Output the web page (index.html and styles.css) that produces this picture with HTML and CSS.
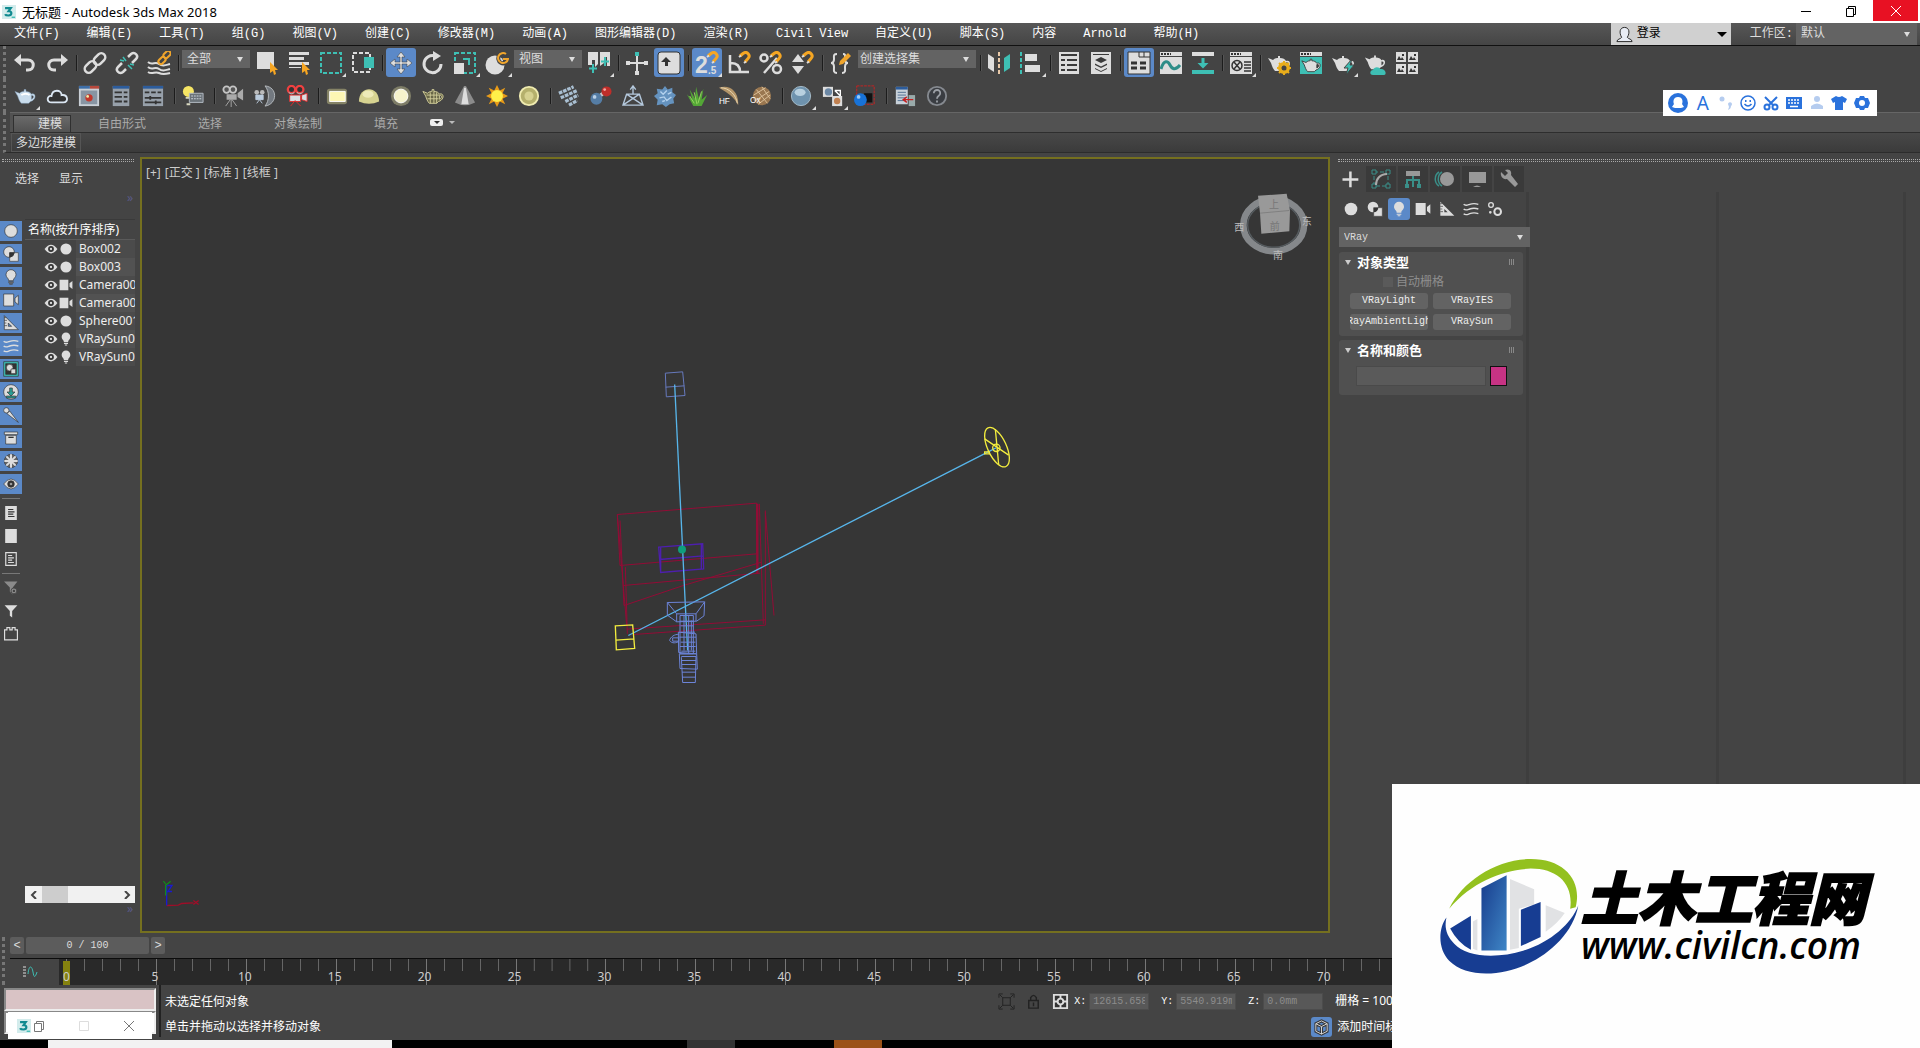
FILE: index.html
```html
<!DOCTYPE html>
<html lang="zh-CN">
<head>
  <meta charset="UTF-8">
  <title>无标题 - Autodesk 3ds Max 2018</title>
  <link rel="stylesheet" href="styles.css">
</head>
<body>

<!-- shapes used in more than one place -->
<svg class="sprite" aria-hidden="true">
  <symbol id="ball" viewBox="0 0 24 24"><circle cx="12" cy="12" r="9.500"/></symbol>
  <symbol id="shapes" viewBox="0 0 24 24"><circle cx="9" cy="9" r="8"/><path d="M10 10h13v13H10z" stroke="#444"/><path d="M10 17a8 8 0 0 0 7-7h-7z" fill="#333"/></symbol>
  <symbol id="bulb" viewBox="0 0 24 24"><path d="M12 1a7.500 7.500 0 0 0-7.500 7.500c0 4.500 4 5 4 9h7c0-4 4-4.500 4-9A7.500 7.500 0 0 0 12 1z"/><path d="M8.500 19h7v1.500h-7zM10 21.500h4V23h-4z"/></symbol>
  <symbol id="camera" viewBox="0 0 24 24"><path d="M1 3h15v18H1zM18 9l5-4v14l-5-4z"/></symbol>
  <symbol id="ruler" viewBox="0 0 24 24"><path fill-rule="evenodd" d="M2 1l21 21H2zM8 12v5h5z"/><path d="M2 4h3M2 8h4M2 12h3M2 16h4" stroke="#333" fill="none"/></symbol>
  <symbol id="waves" viewBox="0 0 24 24"><g fill="none" stroke="currentColor" stroke-width="2"><path d="M1 5c3 3 6 1 9 0s7-2 13 0"/><path d="M1 12c3 3 6 1 9 0s7-2 13 0"/><path d="M1 19c3 3 6 1 9 0s7-2 13 0"/></g></symbol>
  <symbol id="eye" viewBox="0 0 24 24"><path d="M1 12q11-15 22 0q-11 15-22 0z" fill="#ddd"/><circle cx="12" cy="12" r="5" fill="#333"/><circle cx="12" cy="12" r="2" fill="#ddd"/></symbol>
  <symbol id="teapot" viewBox="0 0 24 24"><path d="M1 7l5 2c2-2 4-2 5-2V5h2v2c3 0 5 1 6 3 5-2 6 6-1 8l-2 2H8c-2-2-3-5-4-8z"/><path d="M19 11.500c3-1 3 3 0 4z" fill="#444"/></symbol>
  <symbol id="magnet" viewBox="0 0 24 24"><path d="M12 5l3-2.500c4-3 8 2 5 5L17 11" fill="none" stroke="#f5a623" stroke-width="3"/><path d="M11 6l2-1.500M16 12l2-1.500" stroke="#ddd" stroke-width="2"/></symbol>
  <symbol id="max" viewBox="0 0 16 16"><path d="M0 0h16v16H0z" fill="#d3ecec"/><path d="M3.500 3.500h6.500L7.500 7c4.500 0 4 5 0 5-2 0-3.500-.5-4-1.500" fill="none" stroke="#108a90" stroke-width="2.500"/><path d="M11 14h4" stroke="#3ab9b0" stroke-width="1.500"/></symbol>
</svg>

<header class="titlebar">
  <svg class="app-icon"><use href="#max"/></svg>
  <h1>无标题 - Autodesk 3ds Max 2018</h1>
  <div class="window-buttons">
    <button aria-label="最小化"><svg viewBox="0 0 12 12"><path d="M1 6.500h10"/></svg></button>
    <button aria-label="还原"><svg viewBox="0 0 12 12"><path d="M1.500 3.500h7v8h-7zM3.500 3V1.500h7v8H9"/></svg></button>
    <button class="close" aria-label="关闭"><svg viewBox="0 0 12 12"><path d="M1 1l10 10M11 1L1 11"/></svg></button>
  </div>
</header>

<nav class="menubar">
  <a href="#">文件(F)</a><a href="#">编辑(E)</a><a href="#">工具(T)</a><a href="#">组(G)</a><a href="#">视图(V)</a><a href="#">创建(C)</a><a href="#">修改器(M)</a><a href="#">动画(A)</a><a href="#">图形编辑器(D)</a><a href="#">渲染(R)</a><a href="#">Civil View</a><a href="#">自定义(U)</a><a href="#">脚本(S)</a><a href="#">内容</a><a href="#">Arnold</a><a href="#">帮助(H)</a>
  <div class="account">
    <button class="signin"><svg viewBox="0 0 18 18"><path d="M1 16.500c0-3 4-2.500 5-4.500C3 7 4 1.500 9 1.500S15 7 12 12c1 2 5 1.500 5 4.500z" fill="#e8ecf4" stroke="#222"/></svg>登录</button>
    <label for="workspace">工作区:</label>
    <span class="pick pick-workspace"><select id="workspace"><option>默认</option></select></span>
  </div>
</nav>

<div class="toolbars">
  <div class="toolbar" role="toolbar" aria-label="主工具栏">
    <button aria-label="撤销"><svg viewBox="0 0 24 24"><path d="M3 9h12c7 0 7 10 0 10h-2" fill="none" stroke="#ddd" stroke-width="3"/><path d="M8 3v12L1 9z"/></svg></button>
    <button aria-label="重做"><svg viewBox="0 0 24 24"><path d="M21 9H9c-7 0-7 10 0 10h2" fill="none" stroke="#ddd" stroke-width="3"/><path d="M16 3v12l7-6z"/></svg></button>
    <i class="sep"></i>
    <button aria-label="链接"><svg viewBox="0 0 24 24"><g fill="none" stroke="#ddd" stroke-width="2.500"><rect x="10" y="4" width="13" height="8" rx="4" transform="rotate(-45 16.500 8)"/><rect x="1" y="12" width="13" height="8" rx="4" transform="rotate(-45 7.500 16)"/></g></svg></button>
    <button aria-label="取消链接"><svg viewBox="0 0 24 24"><g fill="none" stroke="#ddd" stroke-width="2.500"><path d="M13 6l3-3c4-3 8 2 5 5l-4 4M11 18l-3 3c-4 3-8-2-5-5l4-4"/><path d="M8 6l3 4M5 9l4 1M13 14l4 4M15 13l4 1" stroke="#3ebfb4" stroke-width="1.500"/></g></svg></button>
    <button aria-label="绑定到空间扭曲"><svg viewBox="0 0 24 24"><g fill="none" stroke="#ddd" stroke-width="2"><path d="M1 11c4 4 7-1 11 2s7 1 11 0M1 16c4 4 7-1 11 2s7 1 11 0M1 21c4 3 7-1 11 1s7 1 11 0"/><g stroke="#f0a52c"><rect x="16" y="1" width="8" height="5" rx="2.500" transform="rotate(-45 20 3.500)"/><rect x="11" y="7" width="8" height="5" rx="2.500" transform="rotate(-45 15 9.500)"/></g></g></svg></button>
    <i class="sep"></i>
    <span class="pick pick-short"><select aria-label="选择过滤器"><option>全部</option></select></span>
    <button aria-label="选择对象"><svg viewBox="0 0 24 24"><path d="M2 1h17v17H2z"/><path d="M15 11v11l3-2 1 4 2-1-1-4h3z" fill="#f6a623"/></svg></button>
    <button aria-label="按名称选择"><svg viewBox="0 0 24 24"><path d="M2 1h20v3H2zM2 6h15v3H2zM2 11h20v3H2zM2 16h12v1H2z"/><path d="M15 11v11l3-2 1 4 2-1-1-4h3z" fill="#f6a623"/></svg></button>
    <button class="flyout" aria-label="矩形选择区域"><svg viewBox="0 0 24 24"><path d="M2 2h20v20H2z" fill="none" stroke="#3ebfb4" stroke-width="2" stroke-dasharray="4 2"/></svg></button>
    <button aria-label="窗口/交叉"><svg viewBox="0 0 24 24"><path d="M2 2h17v19H2z" fill="none" stroke="#ddd" stroke-width="2" stroke-dasharray="4 2"/><path d="M13 6h10v11H13z" fill="#3ebfb4"/></svg></button>
    <i class="sep"></i>
    <button class="on" aria-label="选择并移动"><svg viewBox="0 0 24 24"><path d="M12 1l4 5h-3v5h5V8l5 4-5 4v-3h-5v5h3l-4 5-4-5h3v-5H6v3l-5-4 5-4v3h5V6H8z" stroke="#333" stroke-width=".5"/></svg></button>
    <button aria-label="选择并旋转"><svg viewBox="0 0 24 24"><path d="M14 5a8.500 8.500 0 1 0 6 8" fill="none" stroke="#ddd" stroke-width="3"/><path d="M12 0v10l8-5z"/></svg></button>
    <button class="flyout" aria-label="选择并缩放"><svg viewBox="0 0 24 24"><path d="M2 2h20v20H2z" fill="none" stroke="#3ebfb4" stroke-width="2" stroke-dasharray="4 2"/><path d="M1 12h10v11H1z"/><path d="M10 8h6v6" fill="none" stroke="#3ebfb4" stroke-width="2"/></svg></button>
    <button class="flyout" aria-label="选择并放置"><svg viewBox="0 0 24 24"><circle cx="10" cy="14" r="9.500"/><path d="M22 4a5 5 0 1 0 1 5h-5" fill="none" stroke="#444" stroke-width="4"/><path d="M21 3a5 5 0 1 0 2 5h-5" fill="none" stroke="#f0a52c" stroke-width="2"/></svg></button>
    <span class="pick pick-short"><select aria-label="参考坐标系"><option>视图</option></select></span>
    <button class="flyout" aria-label="使用轴点中心"><svg viewBox="0 0 24 24"><path d="M1 1h10v12l-3 3V9H5v5H1zM13 1h10v14h-3V6h-3v6l-4 3z"/><path d="M6 13v9M2 17.500h8M18 6v9M14 10.500h8" stroke="#3ebfb4" stroke-width="2"/></svg></button>
    <i class="sep"></i>
    <button aria-label="选择并操纵"><svg viewBox="0 0 24 24"><path d="M11 5h2v6h8v2h-8v8h-2v-8H3v-2h8zM1 10h4v4H1zM19 10h4v4h-4zM10 20h4v4h-4z"/><path d="M10 1h4v4h-4z" fill="#3ebfb4"/></svg></button>
    <button class="on" aria-label="键盘快捷键覆盖"><svg viewBox="0 0 24 24"><rect x="1" y="1" width="22" height="22" rx="3" stroke="#333"/><path d="M9 6l5 5h-3v4H8v-4H4z" fill="#333"/></svg></button>
    <i class="sep"></i>
    <button class="on flyout" aria-label="捕捉开关"><svg viewBox="0 0 24 24"><text class="glyph" x="0" y="22">2</text><text class="glyph-s" x="13" y="23">.5</text><use href="#magnet" x="1"/></svg></button>
    <button aria-label="角度捕捉"><svg viewBox="0 0 24 24"><path d="M3 4v17h19M4 12c6 0 9 3 9 9" fill="none" stroke="#ddd" stroke-width="2.500"/><use href="#magnet" x="1"/></svg></button>
    <button aria-label="百分比捕捉"><svg viewBox="0 0 24 24"><g fill="none" stroke="#ddd" stroke-width="2.500"><circle cx="5" cy="7" r="3.500"/><circle cx="18" cy="18" r="4"/><path d="M18 7L5 22"/></g><use href="#magnet"/></svg></button>
    <button aria-label="微调器捕捉"><svg viewBox="0 0 24 24"><path d="M7 3l6 8H1zM1 15h12l-6 8z"/><use href="#magnet"/></svg></button>
    <i class="sep"></i>
    <button aria-label="编辑命名选择集"><svg viewBox="0 0 24 24"><path d="M8 3c-4 0-3 2-3 5 0 2-1 4-3 4 2 0 3 2 3 4 0 3-1 6 3 6M14 3c3 0 2 2 2 5 0 2 1 4 3 4-2 0-3 2-3 4 0 3 1 6-3 6" fill="none" stroke="#ddd" stroke-width="2"/><path d="M10 14l1-4 8-8 3 3-8 8z" fill="#f0a52c"/></svg></button>
    <span class="pick pick-long"><select aria-label="命名选择集"><option>创建选择集</option></select></span>
    <i class="sep"></i>
    <button aria-label="镜像"><svg viewBox="0 0 24 24"><path d="M1 3l6 4v14l-6-4z"/><path d="M23 3l-6 4v14l6-4z" fill="#3ebfb4"/><path d="M12 1v22" stroke="#e8c9a8" stroke-width="2" stroke-dasharray="4 2"/></svg></button>
    <button class="flyout" aria-label="对齐"><svg viewBox="0 0 24 24"><path d="M6 3h12v7H6zM6 14h15v7H6z"/><path d="M2 1v22" stroke="#3ebfb4" stroke-width="2" stroke-dasharray="4 2"/></svg></button>
    <i class="sep"></i>
    <button aria-label="场景资源管理器"><svg viewBox="0 0 24 24"><path d="M2 1h20v22H2z"/><path d="M4 4h16M4 9h4M10 9h10M4 14h4M10 14h10M4 19h4M10 19h10" stroke="#3a3a3a" stroke-width="2"/></svg></button>
    <button aria-label="层资源管理器"><svg viewBox="0 0 24 24"><path d="M2 1h20v22H2z"/><path d="M4 3.500h16" stroke="#3a3a3a"/><path d="M12 6l6 3-6 3-6-3zM6 12.500l6 3 6-3v1.500l-6 3-6-3zM6 17l6 3 6-3v1l-6 3-6-3z" fill="#3a3a3a"/></svg></button>
    <i class="sep"></i>
    <button class="on" aria-label="切换功能区"><svg viewBox="0 0 24 24"><path d="M1 1h22v22H1z" stroke="#333"/><path d="M12 1v5M17 1v5M12 6h11" stroke="#333" fill="none"/><path d="M4 12h6M13 12h6M4 17h6M13 17h6" stroke="#333" stroke-width="3"/></svg></button>
    <button aria-label="曲线编辑器"><svg viewBox="0 0 24 24"><path d="M1 1h22v4H1zM1 6h22v17H1z"/><path d="M2 3h10" stroke="#333" stroke-width="2" stroke-dasharray="2 1"/><path d="M2 18c3-10 7-8 9-4s5 6 10 0" fill="none" stroke="#2d8d88" stroke-width="3"/></svg></button>
    <button aria-label="图解视图"><svg viewBox="0 0 24 24"><path d="M1 1h22v4H1z"/><path d="M1 19h22v4H1zM10.500 7h3v5h4L12 17.500 6.500 12h4z" fill="#3ebfb4"/></svg></button>
    <i class="sep"></i>
    <button class="flyout" aria-label="材质编辑器"><svg viewBox="0 0 24 24"><path d="M1 1h22v4H1zM1 6h22v17H1z"/><path d="M2 3h10" stroke="#333" stroke-width="2" stroke-dasharray="2 1"/><circle cx="8" cy="14.500" r="5" fill="none" stroke="#333" stroke-width="1.500"/><path d="M5 11l6 7M11 11l-6 7M15 11h7M15 14h7M15 17h7M15 20h7" stroke="#333" stroke-width="1.500"/></svg></button>
    <i class="sep"></i>
    <button aria-label="渲染设置"><svg viewBox="0 0 24 24"><use href="#teapot"/><circle cx="17" cy="17" r="4.500" fill="none" stroke="#e8ad1c" stroke-width="3"/><path d="M17 10v14M10 17h14M12 12l10 10M22 12L12 22" stroke="#e8ad1c" stroke-width="2"/><circle cx="17" cy="17" r="2.500" fill="#444"/></svg></button>
    <button aria-label="渲染帧窗口"><svg viewBox="0 0 24 24"><path d="M1 1h22v4H1z"/><path d="M2 3h10" stroke="#333" stroke-width="2" stroke-dasharray="2 1"/><path d="M1 6h22v17H1z" fill="#3ebfb4"/><use href="#teapot" x="2" y="4" width="20" height="20" stroke="#333"/></svg></button>
    <button class="flyout" aria-label="渲染产品"><svg viewBox="0 0 24 24"><use href="#teapot" width="24" height="24"/><path d="M21 8l-8 9h4l-2 7 8-10h-4z" fill="#3ebfb4" stroke="#444"/></svg></button>
    <button aria-label="在云中渲染"><svg viewBox="0 0 24 24"><use href="#teapot" width="24" height="22"/><path d="M10 24c-4 0-3-5 0-5 1-4 7-3 7-1 6-1 7 6 4 6z" fill="#3ebfb4"/></svg></button>
    <button aria-label="打开 A360 库"><svg viewBox="0 0 24 24"><path d="M1 1h10v10H1zM13 1h10v10H13zM1 13h10v10H1zM13 13h10v10H13z"/><path d="M2 9l2-4 2 3 1-2 2 3zM14 9l2-4 2 3 1-2 2 3zM2 21l2-4 2 3 1-2 2 3zM14 21l2-4 2 3 1-2 2 3zM7 3h2v2H7zM19 3h2v2h-2zM7 15h2v2H7zM19 15h2v2h-2z" fill="#333"/></svg></button>
  </div>

  <div class="toolbar toolbar-render" role="toolbar" aria-label="渲染工具栏">
    <button class="flyout" aria-label="渲染茶壶"><svg viewBox="0 0 24 24"><use href="#teapot" fill="#c9dcec" stroke="#7f9db8" stroke-width=".5"/><path d="M8 11q5-3 9 0" stroke="#fff" stroke-width="2" fill="none"/></svg></button>
    <button aria-label="云渲染"><svg viewBox="0 0 24 24"><path d="M6 19c-6 0-5-8 0-7 1-8 11-7 11-1 7-1 8 8 2 8z" fill="#333" stroke="#dbe6f2" stroke-width="2"/></svg></button>
    <button aria-label="帧缓冲"><svg viewBox="0 0 24 24"><path d="M1 1h22v22H1z" fill="#c9cfd6"/><path d="M1 1h12v3H1z" fill="#3d6ea8"/><path d="M13 1h10v3H13z" fill="#b7483c"/><path d="M3 6h18v15H3z" fill="#8895a3"/><circle cx="12" cy="14" r="4" fill="#c2382c"/><circle cx="10.500" cy="12.500" r="1.500" fill="#eea"/></svg></button>
    <button aria-label="属性"><svg viewBox="0 0 24 24"><path d="M3 1h18v22H3z" fill="#97a0aa"/><path d="M3 1h18v3H3z" fill="#2c5c9c"/><path d="M5 8h8M5 13h8M5 18h8M15 8h4M15 13h4M15 18h4" stroke="#333" stroke-width="2"/></svg></button>
    <button aria-label="灯光列表"><svg viewBox="0 0 24 24"><path d="M1 1h22v22H1z" fill="#97a0aa"/><path d="M1 1h22v3H1z" fill="#2c5c9c"/><path d="M3 8h5M10 8h5M17 8h4M3 14h18M3 19h18M9 12v4M15 17v4" stroke="#333" stroke-width="2"/></svg></button>
    <i class="sep"></i>
    <button aria-label="灯光混合"><svg viewBox="0 0 24 24"><circle cx="7" cy="7" r="6" fill="#f6e564"/><path d="M4 13h6v2H4zM5 20h4v2H5z" fill="#d8d8c0"/><path d="M8 9h15v10H8z" fill="#6b7379" stroke="#b8c0c8"/><path d="M10 12h11M10 15h11" stroke="#d5dce2" stroke-dasharray="2 1"/></svg></button>
    <i class="sep"></i>
    <button aria-label="物理相机"><svg viewBox="0 0 24 24"><circle cx="5" cy="5" r="3.500" fill="#555" stroke="#c5c5c5" stroke-width="2"/><circle cx="12" cy="5" r="3.500" fill="#555" stroke="#c5c5c5" stroke-width="2"/><path d="M5 10h11v6H5zM17 9l6-5v13l-6-4z" fill="#aaa"/><path d="M10 16v8M9 16l-5 7M11 16l5 7" stroke="#aaa"/></svg></button>
    <button aria-label="穹顶相机"><svg viewBox="0 0 24 24"><path d="M12 1c14 1 14 20 0 22 5-6 5-16 0-22z" fill="#737980" stroke="#b9bdc1"/><circle cx="3" cy="8" r="2.500" fill="#bbb"/><circle cx="9" cy="8" r="2.500" fill="#bbb"/><path d="M2 11h8v5H2zM6 16l-3 4M6 16l3 4" fill="#bcd" stroke="#bcd"/></svg></button>
    <button aria-label="立体相机"><svg viewBox="0 0 24 24"><path d="M4 11h12v7H4zM17 11l6-2v9l-6-2zM10 17l-5 6M10 17l6 6" fill="#d9dfe2" stroke="#e32b2b"/><circle cx="6" cy="5" r="4" fill="#333" stroke="#f04040" stroke-width="2.500"/><circle cx="15" cy="5" r="4" fill="#333" stroke="#f04040" stroke-width="2.500"/><path d="M3 8c2 2 4 2 6 0M12 8c2 2 4 2 6 0" stroke="#8ed7dc" fill="none"/></svg></button>
    <i class="sep"></i>
    <button aria-label="平面灯"><svg viewBox="0 0 24 24"><rect x="1" y="4" width="22" height="17" rx="3" fill="#858366"/><path d="M4 7h17v11H4z" fill="#fdf6b4" stroke="#fff"/></svg></button>
    <button aria-label="穹顶灯"><svg viewBox="0 0 24 24"><path d="M1 18C1 0 23 0 23 18q-11 5-22 0z" fill="#d7d391"/><ellipse cx="11" cy="10" rx="6" ry="4" fill="#eeeab8"/></svg></button>
    <button aria-label="球体灯"><svg viewBox="0 0 24 24"><circle cx="12" cy="12" r="11" fill="#7e7d67"/><circle cx="12" cy="12" r="7.500" fill="#f6f3cc" stroke="#fff"/></svg></button>
    <button aria-label="网格灯"><svg viewBox="0 0 24 24"><use href="#teapot" fill="#696748" stroke="#d3cf9a"/><path d="M5 11h14M6 15h12M9 8v12M13 7v13M16 8v12" stroke="#d3cf9a"/></svg></button>
    <button aria-label="IES 灯"><svg viewBox="0 0 24 24"><path d="M11 1h2l10 18q-11 6-22 0z" fill="#8b8b8b"/><path d="M11 3h2l3 18h-8z" fill="#ddd"/></svg></button>
    <button aria-label="太阳"><svg viewBox="0 0 24 24"><path d="M12 0l3 6 6-3-3 6 6 3-6 3 3 6-6-3-3 6-3-6-6 3 3-6-6-3 6-3-3-6 6 3z" fill="#e89b18"/><circle cx="12" cy="12" r="6.500" fill="#fff04a"/></svg></button>
    <button aria-label="环境光"><svg viewBox="0 0 24 24"><circle cx="12" cy="12" r="10" fill="#b5b06c" stroke="#efebb0" stroke-width="2"/><circle cx="12" cy="12" r="5" fill="#d6d190"/></svg></button>
    <i class="sep"></i>
    <button aria-label="代理网格"><svg viewBox="0 0 24 24"><path d="M1 9L17 2M3 14l18-8M8 18l14-7M12 22l9-5" stroke="#a9bfd2" stroke-width="3.500" stroke-dasharray="4 1"/></svg></button>
    <button aria-label="融球"><svg viewBox="0 0 24 24"><path d="M7 15l10-8" stroke="#ccc" stroke-width="4"/><circle cx="7" cy="15" r="6.500" fill="#557da5"/><circle cx="18" cy="7" r="5.500" fill="#bf2e2a"/><circle cx="5" cy="13" r="2" fill="#b9d0e6"/><circle cx="16" cy="5" r="1.500" fill="#f2a5a0"/></svg></button>
    <button aria-label="剪裁器"><svg viewBox="0 0 24 24"><path d="M5 10h14l4 12H1zM5 10l18 12M19 10L1 22M12 10V2M9 5l3-4 3 4" fill="none" stroke="#b4c8dc" stroke-width="1.500"/></svg></button>
    <button aria-label="置换"><svg viewBox="0 0 24 24"><path d="M12 1l3 4 5-2v5l4 3-3 4 1 5-5 1-4 3-4-3-6 1 1-6-4-4 4-3-1-5 6 1z" fill="#6593bf"/><path d="M7 7l3 3 4-4M6 14l5-1 3 4 5-4M15 10l4-2M9 18l3-1" stroke="#b4d2ee" stroke-width="1.500" fill="none"/></svg></button>
    <button aria-label="毛发"><svg viewBox="0 0 24 24"><path d="M8 23L1 10l6 6-3-11 6 10 1-13 3 13 5-11-2 12 6-5-6 12z" fill="#53a636"/><path d="M12 21L9 8M13 20l4-13M9 20l-5-8" stroke="#9ad963"/></svg></button>
    <button aria-label="HairFarm"><svg viewBox="0 0 24 24"><path d="M1 3c10-4 22 2 21 19-5-9-9-12-21-19z" fill="#b39468"/><path d="M3 3c9 0 17 8 18 17" stroke="#eddcb8" fill="none"/><text class="tag" x="1" y="21">HF</text></svg></button>
    <button aria-label="Ox"><svg viewBox="0 0 24 24"><circle cx="13" cy="12" r="10" fill="#9a7750"/><path d="M4 11l13-8M6 17L21 7M9 21l13-10M7 5l12 15M13 2l9 13" stroke="#dfc59f"/><text class="tag" x="0" y="20">Ox</text></svg></button>
    <i class="sep"></i>
    <button class="flyout" aria-label="材质球"><svg viewBox="0 0 24 24"><circle cx="12" cy="12" r="10.500" fill="#6f93ae" stroke="#a9bfce"/><ellipse cx="11" cy="8" rx="6" ry="4" fill="#b8d0df"/></svg></button>
    <button class="flyout" aria-label="材质转换"><svg viewBox="0 0 24 24"><path d="M1 2h11v11H1z" fill="#ddd"/><circle cx="7" cy="7.500" r="4" fill="#6c88a5"/><path d="M11 12h11v11H11z" fill="#ddd"/><circle cx="16.500" cy="17.500" r="3.500" fill="#c08050"/><path d="M14 6h6v6M20 12l-6-6" stroke="#fff" stroke-width="1.500" fill="none"/></svg></button>
    <button aria-label="区域渲染"><svg viewBox="0 0 24 24"><path d="M3 1h19v20H3z" fill="none" stroke="#d02020" stroke-dasharray="3 1"/><path d="M11 9h9v10h-9z" fill="#111"/><circle cx="7" cy="16" r="7" fill="#1873d8"/><circle cx="5" cy="13" r="2" fill="#9cc8f5"/></svg></button>
    <i class="sep"></i>
    <button aria-label="导出"><svg viewBox="0 0 24 24"><path d="M2 2h13v19H2z" fill="#c8d1da"/><path d="M2 2h13v3H2z" fill="#2c5c9c"/><path d="M4 8h9M4 11h9M4 14h9M4 17h9" stroke="#4d6c8f"/><path d="M16 11h7v12h-7z" fill="#9aa"/><path d="M21 16H11M14 13l-4 3 4 3" stroke="#c62020" stroke-width="1.500" fill="none"/></svg></button>
    <button aria-label="帮助"><svg viewBox="0 0 24 24"><circle cx="12" cy="12" r="10" fill="#3a3d42" stroke="#85898f" stroke-width="2"/><path d="M8.500 9c0-5 7.500-4.500 7 0 0 3-3.500 2.500-3.500 6M12 17v2" fill="none" stroke="#9b9fa5" stroke-width="2"/></svg></button>
  </div>
</div>

<div class="ribbon">
  <div class="ribbon-tabs">
    <button class="active">建模</button>
    <button>自由形式</button>
    <button>选择</button>
    <button>对象绘制</button>
    <button>填充</button>
    <button class="pill" aria-label="最小化功能区"></button>
    <i class="caret"></i>
  </div>
  <div class="ribbon-panel"><button>多边形建模</button></div>
</div>

<main class="workspace">
  <aside class="explorer">
    <div class="grip"></div>
    <div class="explorer-menu"><a href="#">选择</a><a href="#">显示</a></div>
    <div class="more">»</div>
    <div class="explorer-body">
      <div class="filters">
        <button class="on" aria-label="几何体"><svg><use href="#ball"/></svg></button>
        <button class="on" aria-label="图形"><svg><use href="#shapes"/></svg></button>
        <button class="on" aria-label="灯光"><svg><use href="#bulb"/></svg></button>
        <button class="on" aria-label="摄影机"><svg><use href="#camera"/></svg></button>
        <button class="on" aria-label="辅助对象"><svg><use href="#ruler"/></svg></button>
        <button class="on" aria-label="空间扭曲"><svg><use href="#waves"/></svg></button>
        <button class="on" aria-label="组"><svg viewBox="0 0 24 24"><path d="M1 1h22v22H1z" fill="#3ebfb4"/><path d="M4 4h16v16H4z" fill="#333"/><circle cx="10" cy="10" r="5"/><path d="M12 12h7v7h-7z"/></svg></button>
        <button class="on" aria-label="外部参照"><svg viewBox="0 0 24 24"><circle cx="12" cy="12" r="11"/><path d="M10 6h4v6h4l-6 6-6-6h4zM5 18h14v3H5z" fill="#2b9d93"/></svg></button>
        <button class="on" aria-label="骨骼"><svg viewBox="0 0 24 24"><circle cx="5" cy="5" r="4"/><path d="M6 10l4-4 13 17z"/></svg></button>
        <button class="on" aria-label="容器"><svg viewBox="0 0 24 24"><path d="M2 3h20v4H2zM4 8h16v13H4z"/><path d="M8 11h8" stroke-width="2"/></svg></button>
        <button class="on" aria-label="冻结"><svg viewBox="0 0 24 24"><circle cx="12" cy="12" r="10" fill="#666"/><path d="M12 2v20M2 12h20M5 5l14 14M19 5L5 19" stroke="#ddd" stroke-width="3"/></svg></button>
        <button class="on" aria-label="隐藏"><svg><use href="#eye"/></svg></button>
        <hr>
        <button aria-label="全部显示"><svg viewBox="0 0 24 24"><path d="M2 0h20v24H2z"/><path d="M7 6h9M7 10h11M7 14h9M7 18h11" stroke="#333" stroke-width="2"/></svg></button>
        <button aria-label="全部不显示"><svg viewBox="0 0 24 24"><path d="M2 0h20v24H2z"/></svg></button>
        <button aria-label="反转显示"><svg viewBox="0 0 24 24"><path d="M3 1h18v22H3z" fill="none" stroke="#ddd" stroke-width="2"/><path d="M7 6h7M7 10h10M7 14h7M7 18h10" stroke="#ddd" stroke-width="2"/></svg></button>
        <hr>
        <button aria-label="过滤器设置"><svg class="dim" viewBox="0 0 24 24"><path d="M0 1h23l-8 10v12l-5-5v-7z"/><circle cx="17" cy="17" r="5" stroke="#444" stroke-width="1.500"/><circle cx="17" cy="17" r="2" fill="#444"/></svg></button>
        <button aria-label="过滤器"><svg viewBox="0 0 24 24"><path d="M1 2h22l-9 10v11l-4-3v-8z"/></svg></button>
        <button aria-label="容器过滤"><svg viewBox="0 0 24 24"><path d="M1 5h4V1h5v4h4V1h5v4h4v17H1z" fill="none" stroke="#ddd" stroke-width="2"/></svg></button>
      </div>
      <div class="tree">
        <div class="tree-head">名称(按升序排序)</div>
        <ul>
          <li><svg><use href="#eye"/></svg><svg><use href="#ball"/></svg><span>Box002</span></li>
          <li><svg><use href="#eye"/></svg><svg><use href="#ball"/></svg><span>Box003</span></li>
          <li><svg><use href="#eye"/></svg><svg><use href="#camera"/></svg><span>Camera001</span></li>
          <li><svg><use href="#eye"/></svg><svg><use href="#camera"/></svg><span>Camera001.Target</span></li>
          <li><svg><use href="#eye"/></svg><svg><use href="#ball"/></svg><span>Sphere001</span></li>
          <li><svg><use href="#eye"/></svg><svg><use href="#bulb"/></svg><span>VRaySun001</span></li>
          <li><svg><use href="#eye"/></svg><svg><use href="#bulb"/></svg><span>VRaySun001.Target</span></li>
        </ul>
        <div class="scrollbar">
          <button aria-label="向左"><svg viewBox="0 0 8 8"><path d="M6 0L2 4l4 4"/></svg></button>
          <i class="thumb"></i>
          <button aria-label="向右"><svg viewBox="0 0 8 8"><path d="M2 0l4 4-4 4"/></svg></button>
        </div>
      </div>
    </div>
    <div class="more more-bottom">»</div>
  </aside>

  <section class="viewport">
    <div class="viewport-label"><span>[+]</span><span>[正交 ]</span><span>[标准 ]</span><span>[线框 ]</span></div>
    <svg class="scene" viewBox="142 159 1186 771">
      <!-- wireframe objects -->
      <svg x="580" y="360" width="460" height="340" viewBox="0 0 1380 1020" fill="none" stroke-width="3">
        <g stroke="#920c36">
          <path d="M112 462L530 428V580L120 615ZM112 462L140 795M120 480L132 735M130 675L540 638M132 735L310 675L545 605M136 620L142 820M140 806L556 778M160 822L556 794M556 450V794M538 430L550 790M556 455L582 765"/>
          <path d="M532 430V640" stroke-width="7"/>
        </g>
        <path d="M236 560L368 550 371 625 242 636ZM238 597L370 586M242 560V636M364 550V625" stroke="#4d1fae" stroke-width="4"/>
        <path d="M256 38L308 34 315 105 259 109ZM257 80L313 76" stroke="#6679bd"/>
        <path d="M284 72L316 735 323 870M145 825L1248 262" stroke="#57b5ea" stroke-width="4"/>
        <g stroke="#6c84d8">
          <path d="M262 726L374 724 372 766 350 782 290 784 262 764ZM262 726L290 760H348L374 724M290 760V784M348 760V782"/>
          <path d="M300 765H340V880H300ZM295 815L348 820 350 880 296 876ZM298 880H350L352 926 300 924ZM304 890L308 966H346L348 888M300 782H340M302 796H340M302 815H345M298 830H348M302 845H346M300 858H347M304 872H346M304 888H348M304 900H348M306 912H348M306 935H348M306 950H348M312 765V870M326 765V880M334 780V870"/>
          <path d="M296 822C285 820 270 830 269 840C275 850 290 848 297 842M278 832h18v10h-18z"/>
        </g>
        <circle cx="306" cy="567" r="12" fill="#0e9f7c" stroke="none"/>
        <g stroke="#f2ec3e" stroke-width="4">
          <path d="M106 796L158 793 164 864 109 868ZM108 839L163 835"/>
          <ellipse cx="1251" cy="260" rx="28" ry="64" transform="rotate(-25 1251 260)"/>
          <circle cx="1249" cy="262" r="11"/>
          <path d="M1246 206L1256 312M1214 235L1286 284M1214 274h14v6h-14z"/>
        </g>
      </svg>
      <!-- view cube -->
      <svg x="1230" y="190" width="87" height="74" viewBox="90 120 261 222">
        <ellipse cx="221" cy="224" rx="91" ry="78" fill="none" stroke="#85888b" stroke-width="20"/>
        <ellipse cx="221" cy="224" rx="78" ry="66" fill="none" stroke="#565c60" stroke-width="4"/>
        <path d="M174 136L260 130 270 180 268 242 184 250 180 188Z" fill="#999"/>
        <path d="M180 188L268 180" stroke="#808080" stroke-width="3"/>
        <g class="cube-text"><text x="222" y="172">上</text><text x="224" y="238">前</text><text x="118" y="240">西</text><text x="320" y="222">东</text><text x="234" y="326">南</text></g>
      </svg>
      <!-- world axis -->
      <svg x="160" y="875" width="47" height="40" viewBox="480 45 141 120" fill="none" stroke-width="4">
        <path d="M500 135L535 134 545 129 580 127M580 120l16 12M596 120l-16 12" stroke="#a00d28"/>
        <path d="M500 135V75M502 75h14l-12 18h12" stroke="#1a1ad0"/>
        <path d="M497 105V72M490 62l7 8M512 62l-15 12" stroke="#138a1b"/>
      </svg>
    </svg>
  </section>

  <aside class="command">
    <div class="grip"></div>
    <div class="command-columns">
      <div class="command-panel">
        <div class="command-tabs">
          <button class="active" aria-label="创建"><svg viewBox="0 0 24 24"><path d="M11 3h3v8h8v3h-8v8h-3v-8H3v-3h8z"/></svg></button>
          <button aria-label="修改"><svg viewBox="0 0 24 24"><path d="M5 5h14v14H5z" fill="none" stroke="#3a8f89" stroke-dasharray="4 2"/><path d="M3 3h4v4H3zM17 3h4v4h-4zM3 17h4v4H3zM17 17h4v4h-4z" fill="#383838" stroke="#3a8f89"/><path d="M7 18c0-6 4-11 11-11" fill="none" stroke="#aaa" stroke-width="2"/></svg></button>
          <button aria-label="层次"><svg viewBox="0 0 24 24"><path d="M5 4h14v5H5z"/><path d="M12 9v11M6 19v-6h12v6" fill="none" stroke="#3a8f89" stroke-width="2"/><path d="M4 17h4v4H4zM16 17h4v4h-4z" fill="#3a8f89"/></svg></button>
          <button aria-label="运动"><svg viewBox="0 0 24 24"><circle cx="14" cy="12" r="7"/><path d="M9 5c-5 3-5 11 0 14M6 5c-5 3-5 11 0 14" fill="none" stroke="#3a8f89" stroke-width="1.500"/></svg></button>
          <button aria-label="显示"><svg viewBox="0 0 24 24"><path d="M4 5h17v11H4zM8 20q4-3 8 0z"/></svg></button>
          <button aria-label="实用程序"><svg viewBox="0 0 24 24"><path d="M4 5l4 4 3-3-3-3c5-2 7 2 6 5l7 9-3 3-8-8c-4 1-7-3-6-7z"/></svg></button>
        </div>
        <div class="categories">
          <button aria-label="几何体"><svg><use href="#ball"/></svg></button>
          <button aria-label="图形"><svg><use href="#shapes"/></svg></button>
          <button class="on" aria-label="灯光"><svg><use href="#bulb"/></svg></button>
          <button aria-label="摄影机"><svg><use href="#camera"/></svg></button>
          <button aria-label="辅助对象"><svg><use href="#ruler"/></svg></button>
          <button aria-label="空间扭曲"><svg><use href="#waves"/></svg></button>
          <button aria-label="系统"><svg viewBox="0 0 24 24"><g fill="none" stroke="#ddd" stroke-width="2"><circle cx="6" cy="6" r="3.500"/><circle cx="16" cy="16" r="5" stroke-width="3"/><circle cx="5" cy="17" r="1"/></g></svg></button>
        </div>
        <span class="pick pick-type"><select aria-label="灯光类型"><option>VRay</option></select></span>
        <section class="rollout">
          <h2>对象类型</h2>
          <label class="autogrid"><input type="checkbox" disabled>自动栅格</label>
          <div class="object-types">
            <button><span>VRayLight</span></button><button><span>VRayIES</span></button>
            <button><span>VRayAmbientLight</span></button><button><span>VRaySun</span></button>
          </div>
        </section>
        <section class="rollout">
          <h2>名称和颜色</h2>
          <div class="name-color"><input type="text" aria-label="名称"><button class="swatch" aria-label="颜色"></button></div>
        </section>
      </div>
      <div class="command-empty"></div>
      <div class="command-empty"></div>
    </div>
  </aside>
</main>

<footer>
  <div class="timeline">
    <div class="time-slider">
      <button aria-label="上一帧">&lt;</button>
      <button class="frame">0 / 100</button>
      <button aria-label="下一帧">&gt;</button>
    </div>
    <div class="trackbar">
      <button class="mini-curve" aria-label="打开迷你曲线编辑器"><svg viewBox="0 0 16 12"><path d="M1 1h3M1 4h3M1 7h3M1 10h3" stroke="#ddd"/><path d="M6 8c1-10 4-8 5-2s2 6 4 0" stroke="#3ebfb4"/></svg></button>
      <ol class="ruler-track">
        <li class="key"><span>0</span></li><li><span>5</span></li><li><span>10</span></li><li><span>15</span></li><li><span>20</span></li><li><span>25</span></li><li><span>30</span></li><li><span>35</span></li><li><span>40</span></li><li><span>45</span></li><li><span>50</span></li><li><span>55</span></li><li><span>60</span></li><li><span>65</span></li><li><span>70</span></li><li><span>75</span></li><li><span>80</span></li><li><span>85</span></li><li><span>90</span></li><li><span>95</span></li>
      </ol>
    </div>
  </div>

  <div class="status">
    <div class="listener">
      <div class="listener-macro"></div>
      <div class="listener-out"></div>
      <div class="mini-window">
        <svg class="app-icon"><use href="#max"/></svg>
        <button aria-label="还原"><svg viewBox="0 0 12 12"><path d="M1.500 3.500h7v8h-7zM3.500 3V1.500h7v8H9"/></svg></button>
        <button class="faded" aria-label="最大化"><svg viewBox="0 0 12 12"><path d="M1.500 1.500h9v9h-9z"/></svg></button>
        <button aria-label="关闭"><svg viewBox="0 0 12 12"><path d="M1 1l10 10M11 1L1 11"/></svg></button>
      </div>
    </div>
    <div class="messages">
      <p>未选定任何对象</p>
      <p>单击并拖动以选择并移动对象</p>
    </div>
    <div class="coords">
      <div class="coords-row">
        <button aria-label="孤立当前选择"><svg viewBox="0 0 18 18" fill="none" stroke="#222"><path d="M1 5V1h4M13 1h4v4M17 13v4h-4M5 17H1v-4M5 5h8v8H5zM2 2l3 3M16 2l-3 3M2 16l3-3M16 16l-3-3"/></svg></button>
        <button aria-label="选择锁定"><svg viewBox="0 0 18 18" fill="none" stroke="#222" stroke-width="1.500"><path d="M4 8h10v8H4zM6 8V5q3-5 6 0v3M9 10v4"/></svg></button>
        <button aria-label="绝对模式"><svg viewBox="0 0 18 18"><path d="M2 2h14v14H2z" fill="#333" stroke="#ddd" stroke-width="2"/><circle cx="9" cy="9" r="3" fill="none" stroke="#ddd" stroke-width="2"/><path d="M9 2v4M9 12v4M2 9h4M12 9h4" stroke="#ddd" stroke-width="2"/></svg></button>
        <label for="cx">X:</label><input id="cx" type="text" value="12615.658mm">
        <label for="cy">Y:</label><input id="cy" type="text" value="5540.919mm">
        <label for="cz">Z:</label><input id="cz" type="text" value="0.0mm">
        <span class="grid-size">栅格 = 1000.0mm</span>
      </div>
      <div class="coords-row tag-row">
        <button class="on" aria-label="时间标记"><svg viewBox="0 0 18 18" fill="none" stroke="#333" stroke-width="3"><path id="cube" d="M9 2l6 3v8l-6 3-6-3V5zM3 5l6 3 6-3M9 8v8"/><path d="M9 2l6 3v8l-6 3-6-3V5zM3 5l6 3 6-3M9 8v8" stroke="#ddd" stroke-width="1"/></svg></button>
        <span>添加时间标记</span>
      </div>
    </div>
  </div>
  <div class="taskbar"><i class="task task-search"></i><i class="task task-idle"></i><i class="task task-alert"></i></div>
</footer>

<div class="ime" role="toolbar" aria-label="输入法">
  <button aria-label="账户"><svg viewBox="0 0 20 20"><circle cx="10" cy="10" r="10"/><path d="M10 4c5 0 5 5 4 7l2 3-3 1H7l-3-1 2-3c-1-2-1-7 4-7z" fill="#fff"/></svg></button>
  <button class="ime-mode">A</button>
  <button aria-label="标点"><svg class="pale" viewBox="0 0 16 16"><circle cx="4" cy="4" r="2.500"/><path d="M10 9a2 2 0 1 1 3 2c0 2-1 3-3 4l1-3z"/></svg></button>
  <button aria-label="表情"><svg viewBox="0 0 16 16"><circle cx="8" cy="8" r="7" fill="none" stroke="#2a72dc" stroke-width="1.500"/><path d="M5 5h1.500v2H5zM9.500 5H11v2H9.500z"/><path d="M4.500 9q3.500 4 7 0" fill="none" stroke="#2a72dc" stroke-width="1.500"/></svg></button>
  <button aria-label="截图"><svg viewBox="0 0 16 16" fill="none" stroke="#2a72dc" stroke-width="2"><circle cx="4" cy="12" r="2.500"/><circle cx="12" cy="12" r="2.500"/><path d="M2 2l8 8M14 2L6 10"/></svg></button>
  <button aria-label="键盘"><svg viewBox="0 0 16 16"><path d="M0 2h16v12H0z"/><path d="M2 5h12M2 8h12" stroke="#fff" stroke-width="1.500" stroke-dasharray="2 1"/><path d="M4 11.500h8" stroke="#fff" stroke-width="1.500"/></svg></button>
  <button aria-label="用户"><svg class="pale" viewBox="0 0 16 16"><circle cx="8" cy="4" r="3"/><path d="M2 14V11q6-5 12 0v3z"/></svg></button>
  <button aria-label="皮肤"><svg viewBox="0 0 16 16"><path d="M5 1q3 2 6 0l5 3-2 4-2-1v8H4V7L2 8 0 4z"/></svg></button>
  <button aria-label="设置"><svg viewBox="0 0 16 16"><path d="M6 1h4l1 2h3l2 5-2 5h-3l-1 2H6l-1-2H2L0 8l2-5h3z"/><circle cx="8" cy="8" r="3" fill="#fff"/></svg></button>
</div>

<div class="brand">
  <svg class="brand-logo" viewBox="170 230 415 350">
    <defs>
      <linearGradient id="tower" x2="1" y2="1"><stop stop-color="#173b8c"/><stop offset="1" stop-color="#3f86c6"/></linearGradient>
    </defs>
    <path d="M379 295L450 325V370L405 382V498L379 503ZM484 372L540 395Q520 425 484 450ZM270 420L283 412V505L270 500Z" fill="#e1e2e4"/>
    <path d="M295 322L369 284V505H295Z" fill="url(#tower)"/>
    <path d="M203 440L264 403V503Q225 482 203 440ZM411 385L469 362V465L411 492Z" fill="#173d92"/>
    <path d="M200 382C240 300 340 236 440 236C540 236 592 300 572 378L556 382C566 310 520 264 440 264C360 268 270 300 200 382Z" fill="#93c11f"/>
    <path d="M192 408C168 440 166 500 200 535C250 585 350 582 430 545C500 512 566 450 580 372C560 425 500 480 420 505C340 530 250 525 215 485C190 460 186 435 192 408Z" fill="#173d92"/>
  </svg>
  <div class="brand-text">
    <strong>土木工程网</strong>
    <span>www.civilcn.com</span>
  </div>
</div>

</body>
</html>
```
FILE: styles.css
```css
* {
  box-sizing: border-box;
}

body {
  margin: 0;
  height: 100vh;
  display: flex;
  flex-direction: column;
  overflow: hidden;
  background: #444;
  color: #ddd;
  font: 12px/16px "Noto Sans", "Noto Sans CJK SC", sans-serif;
}

h1, h2, p, ul, ol {
  margin: 0;
  padding: 0;
  list-style: none;
  font-size: 12px;
  font-weight: normal;
}

a {
  color: inherit;
  text-decoration: none;
}

button, select, input {
  margin: 0;
  padding: 0;
  border: 0;
  background: none;
  color: inherit;
  font: inherit;
}

button {
  display: flex;
  align-items: center;
  justify-content: center;
  flex: none;
}

svg {
  display: block;
  fill: #ddd;
  color: #ddd;
  flex: none;
}

svg[fill="none"] {
  fill: none;
}

.sprite {
  width: 0;
  height: 0;
  position: absolute;
}

.on {
  background: #5b89c8;
  border-radius: 3px;
}

/* title bar */
.titlebar {
  display: flex;
  align-items: center;
  height: 23px;
  padding-left: 2px;
  background: #fff;
  color: #000;
}

.app-icon {
  width: 14px;
  height: 14px;
}

.titlebar h1 {
  margin-left: 6px;
  flex: 1;
  font-size: 13px;
}

.window-buttons {
  display: flex;
  align-self: flex-start;
  padding-right: 2px;
}

.window-buttons button {
  width: 45px;
  height: 21px;
}

.window-buttons svg,
.mini-window button svg {
  width: 12px;
  height: 12px;
  fill: none;
  stroke: #000;
}

.window-buttons .close {
  background: #e81123;
}

.window-buttons .close svg {
  stroke: #fff;
}

/* menus */
.menubar {
  display: flex;
  align-items: center;
  gap: 27px;
  height: 23px;
  padding: 0 3px 0 14px;
  border-bottom: 1px solid #111;
  background: linear-gradient(#575757, #454545);
  color: #fff;
  font-family: "Liberation Mono", "Noto Sans CJK SC", monospace;
  white-space: nowrap;
}

.menubar a {
  height: 18px;
  line-height: 18px;
}

.account {
  display: flex;
  align-items: center;
  margin-left: auto;
  height: 100%;
  color: #ddd;
}

.signin {
  position: relative;
  width: 120px;
  height: 100%;
  justify-content: flex-start;
  gap: 4px;
  padding-left: 5px;
  background: #d0d0d0;
  color: #000;
}

.signin svg {
  width: 17px;
  height: 17px;
}

.signin::after {
  content: "";
  margin: 0 4px 0 auto;
  border: 5px solid transparent;
  border-top-color: #000;
  border-bottom: 0;
}

.account label {
  margin: 0 3px 0 19px;
}

.pick {
  position: relative;
  display: block;
  flex: none;
}

.pick select {
  appearance: none;
  display: block;
  width: 100%;
  height: 100%;
  padding-left: 5px;
  background: #636363;
}

.pick::after {
  content: "";
  position: absolute;
  right: 7px;
  top: calc(50% - 2px);
  border: 3px solid transparent;
  border-top: 5px solid #ddd;
  border-bottom: 0;
  pointer-events: none;
}

.pick-workspace {
  width: 121px;
  height: 22px;
}

/* toolbars */
.toolbars {
  padding-left: 3px;
}

.toolbar {
  display: flex;
  align-items: center;
  gap: 2px;
  height: 33px;
  padding-left: 4px;
  border-left: 3px dotted #777;
}

.toolbar button {
  position: relative;
  width: 30px;
  height: 29px;
}

.toolbar svg {
  width: 24px;
  height: 24px;
}

.toolbar-render svg {
  width: 22px;
  height: 22px;
}

.flyout::after {
  content: "";
  position: absolute;
  right: 0;
  bottom: 0;
  border: 2px solid #ddd;
  border-top-color: transparent;
  border-left-color: transparent;
}

.sep {
  flex: none;
  width: 4px;
  height: 16px;
  border-right: 1px solid #555;
  box-shadow: inset -1px 0 #1c1c1c;
}

.toolbar-render .sep {
  width: 6px;
}

.pick-short,
.pick-long {
  height: 18px;
  align-self: flex-start;
  margin-top: 4px;
}

.pick-short {
  width: 68px;
}

.pick-long {
  width: 118px;
}

.pick-long select {
  padding-left: 2px;
}

.glyph {
  font: bold 23px "Liberation Sans", sans-serif;
}

.glyph-s {
  font: bold 10px "Liberation Sans", sans-serif;
}

.tag {
  font: 9px "Liberation Sans", sans-serif;
  fill: #fff;
}

/* ribbon */
.ribbon {
  margin-left: 3px;
  padding-left: 4px;
  border-left: 3px dotted #777;
  border-bottom: 1px solid #2c2c2c;
}

.ribbon-tabs {
  display: flex;
  align-items: flex-end;
  height: 21px;
  padding-left: 3px;
  border-top: 1px solid #666;
  border-bottom: 1px solid #2e2e2e;
  background: #525252;
  color: #aaa;
}

.ribbon-tabs button {
  height: 17px;
  margin-right: 52px;
}

.ribbon-tabs .active {
  padding: 0 8px 0 24px;
  margin-right: 27px;
  border: 1px solid #303030;
  border-bottom: 0;
  background: linear-gradient(#6a6a6a, #525252);
  color: #ddd;
}

.ribbon-tabs button:nth-child(5) {
  margin-right: 32px;
}

.ribbon-tabs .pill {
  align-self: center;
  width: 13px;
  height: 7px;
  margin-right: 6px;
  border-radius: 2px;
  background: #eee;
}

.pill::after {
  content: "";
  border: 3px solid transparent;
  border-top-color: #333;
  border-bottom: 0;
}

.caret {
  align-self: center;
  border: 3px solid transparent;
  border-top-color: #bbb;
  border-bottom: 0;
}

.ribbon-panel {
  height: 19px;
  padding-left: 1px;
  background: linear-gradient(#484848, #3b3b3b);
}

.ribbon-panel button {
  height: 19px;
  padding: 0 4px;
  border: 1px solid #555;
}

/* main area */
.workspace {
  flex: 1;
  min-height: 0;
  display: grid;
  grid-template-columns: 140px minmax(0, 1fr) 590px;
  padding: 4px 0;
}

.grip {
  height: 3px;
  margin: 2px 6px 0 2px;
  border-top: 1px dotted #aaa;
  border-bottom: 1px dotted #aaa;
}

.explorer {
  display: flex;
  flex-direction: column;
  min-height: 0;
}

.explorer-menu {
  display: flex;
  gap: 20px;
  height: 30px;
  padding: 9px 15px 0;
}

.more {
  height: 14px;
  padding-right: 7px;
  line-height: 12px;
  text-align: right;
  color: #5a5a88;
}

.more-bottom {
  height: 30px;
}

.explorer-body {
  flex: 1;
  min-height: 0;
  display: flex;
  gap: 3px;
  padding-top: 13px;
}

.filters {
  display: flex;
  flex-direction: column;
  gap: 3px;
  width: 22px;
  padding-top: 2px;
}

.filters button {
  width: 22px;
  height: 20px;
  border-radius: 0;
}

.filters svg {
  width: 14px;
  height: 14px;
}

.filters .on svg {
  width: 16px;
  height: 16px;
  stroke: #333;
}

.filters .dim {
  fill: #8b8b8b;
}

.filters hr {
  width: 18px;
  height: 1px;
  margin: 1px 2px;
  border: 0;
  background: #777;
}

.tree {
  display: flex;
  flex-direction: column;
  width: 110px;
  border-top: 1px solid #3a3a3a;
}

.tree-head {
  height: 20px;
  padding-left: 3px;
  border-bottom: 1px solid #5a5a5a;
  color: #fff;
  line-height: 19px;
  white-space: nowrap;
  overflow: hidden;
}

.tree ul {
  flex: 1;
}

.tree li {
  display: flex;
  align-items: center;
  gap: 1px;
  height: 18px;
  padding-left: 19px;
}

.tree li svg {
  width: 14px;
  height: 14px;
}

.tree li span {
  flex: 1;
  min-width: 0;
  margin-left: 2px;
  padding-left: 3px;
  background: #4b4b4b;
  color: #eee;
  line-height: 18px;
  overflow: hidden;
  white-space: nowrap;
}

.tree li:nth-child(even) span {
  background: #525252;
}

.scrollbar {
  display: flex;
  height: 17px;
  background: #f1f1f1;
}

.scrollbar button {
  width: 17px;
}

.scrollbar svg {
  width: 8px;
  height: 8px;
  fill: none;
  stroke: #444;
  stroke-width: 2;
}

.thumb {
  width: 26px;
  margin-right: auto;
  background: #cdcdcd;
}

.viewport {
  position: relative;
  min-height: 0;
  border: 2px solid #75701f;
  background: #363636;
}

.viewport-label {
  position: absolute;
  left: 4px;
  top: 6px;
  display: flex;
  gap: 4px;
  color: #ccc;
}

.scene {
  width: 100%;
  height: 100%;
}

.cube-text {
  font-size: 30px;
  fill: #bbb;
  text-anchor: middle;
}

.cube-text text:nth-child(-n+2) {
  fill: #777;
}

/* command panel */
.command {
  display: flex;
  flex-direction: column;
  padding-left: 6px;
  min-width: 0;
}

.command .grip {
  margin-right: 0;
}

.command-columns {
  flex: 1;
  display: grid;
  grid-template-columns: 190px 190px 190px;
  margin-top: 4px;
}

.command-tabs {
  display: flex;
  gap: 2px;
}

.command-tabs button {
  width: 30px;
  height: 26px;
  background: #3a3a3a;
}

.command-tabs .active {
  width: 28px;
  background: none;
}

.command-tabs svg {
  width: 24px;
  height: 24px;
  fill: #999;
}

.command-tabs .active svg {
  width: 20px;
  fill: #ddd;
}

.categories {
  display: flex;
  gap: 2px;
  padding: 6px 0 7px 4px;
}

.categories button {
  width: 22px;
  height: 22px;
}

.categories svg {
  width: 16px;
  height: 16px;
}

.pick-type {
  width: 191px;
  height: 20px;
  margin: 0 0 5px 3px;
  font: 10px "Liberation Mono", monospace;
}

.rollout {
  width: 184px;
  margin: 0 0 4px 3px;
  padding-bottom: 6px;
  border-radius: 3px;
  background: #505050;
}

.rollout h2 {
  display: flex;
  align-items: center;
  height: 20px;
  padding: 0 8px 0 6px;
  color: #fff;
  font-size: 13px;
  font-weight: bold;
}

.rollout h2::before {
  content: "";
  margin-right: 6px;
  border: 3px solid transparent;
  border-top: 5px solid #ccc;
  border-bottom: 0;
}

.rollout h2::after {
  content: "";
  width: 6px;
  height: 6px;
  margin-left: auto;
  background: repeating-linear-gradient(90deg, #888 0 1px, transparent 1px 2px);
}

.autogrid {
  display: flex;
  align-items: center;
  gap: 3px;
  height: 19px;
  padding-left: 44px;
  color: #8e8e8e;
}

.autogrid input {
  appearance: none;
  width: 10px;
  height: 10px;
  background: #5a5a5a;
}

.object-types {
  display: grid;
  grid-template-columns: 78px 78px;
  gap: 5px;
  padding: 2px 11px 0;
}

.object-types button {
  height: 16px;
  border-radius: 3px;
  background: #636363;
  color: #eee;
  font: 10px/16px "Liberation Mono", monospace;
  overflow: hidden;
}

.name-color {
  display: flex;
  gap: 4px;
  padding: 6px 14px 3px 17px;
}

.name-color input {
  width: 130px;
  height: 20px;
  background: #5a5a5a;
  border: 1px solid #4a4a4a;
}

.swatch {
  width: 17px;
  height: 20px;
  border: 1px solid #111;
  background: #c73384;
}

.command-empty {
  margin-top: 26px;
  border-left: 3px solid #3e3e3e;
}

.command-empty:last-child {
  border-right: 3px solid #3e3e3e;
}

/* time slider and track bar */
.timeline {
  margin-left: 2px;
  padding-left: 5px;
  border-left: 3px dotted #777;
}

.time-slider {
  display: flex;
  gap: 2px;
  height: 21px;
  color: #ddd;
  font: 10px "Liberation Mono", monospace;
}

.time-slider button {
  width: 14px;
  height: 17px;
  border-radius: 2px;
  background: #5c5c5c;
  font-size: 12px;
}

.time-slider .frame {
  width: 123px;
  font-size: 10px;
}

.trackbar {
  display: flex;
  height: 27px;
  border-top: 1px solid #0c0c0c;
}

.mini-curve {
  width: 49px;
  padding-right: 10px;
}

.mini-curve svg {
  width: 16px;
  height: 12px;
  fill: none;
}

.ruler-track {
  flex: 1;
  display: flex;
  padding: 0 56px 0 7px;
  background: #292929;
}

.ruler-track li {
  flex: 1;
  display: flex;
  align-items: flex-end;
  background:
    linear-gradient(90deg, #777 1px, transparent 1px) 0 0 / 100% 100% no-repeat,
    linear-gradient(90deg, #666 1px, transparent 1px) 0 0 / 20% 12px repeat-x;
}

.ruler-track span {
  width: 20px;
  margin-left: -11px;
  text-align: center;
  color: #ccc;
}

.ruler-track .key span {
  width: 7px;
  height: 24px;
  margin-left: -3px;
  padding-top: 8px;
  background: #85820f;
}

/* status bar */
.status {
  display: flex;
  height: 55px;
  padding-left: 4px;
}

.listener {
  position: relative;
  width: 157px;
  padding-top: 3px;
  margin-bottom: 3px;
  border-right: 2px solid #222;
}

.listener-macro,
.listener-out {
  width: 152px;
  height: 23px;
  border: 2px solid #eee;
  border-top-color: #888;
  border-left-color: #888;
  background: #d9c3c5;
}

.listener-out {
  background: #fff;
}

.mini-window {
  position: absolute;
  left: 4px;
  top: 27px;
  display: flex;
  align-items: center;
  width: 144px;
  height: 27px;
  padding: 0 17px 0 9px;
  background: #fff;
}

.mini-window button svg {
  stroke: #777;
}

.mini-window .faded svg {
  stroke: #ddd;
}

.mini-window .faded,
.mini-window .faded + button {
  margin-left: auto;
}

.mini-window .app-icon + button {
  margin-left: 2px;
}

.messages {
  flex: 1;
  padding: 9px 0 0 4px;
  color: #fff;
}

.messages p {
  height: 25px;
}

.coords {
  flex: 0 0 49%;
  padding: 6px 0 0 12px;
}

.coords-row {
  display: flex;
  align-items: center;
  height: 20px;
  white-space: nowrap;
  color: #fff;
}

.coords-row button {
  width: 27px;
}

.coords-row button svg {
  width: 17px;
  height: 17px;
}

.coords-row label {
  width: 15px;
  font: 10px "Liberation Mono", monospace;
}

.coords-row input {
  width: 60px;
  height: 17px;
  margin-right: 12px;
  padding: 0 3px;
  border: 1px solid #4c4c4c;
  background: #585858;
  color: #8c8c8c;
  font: 10px "Liberation Mono", monospace;
}

.coords .tag-row {
  height: 24px;
  margin-top: 4px;
  padding-left: 318px;
  gap: 5px;
}

.coords-row .on {
  width: 21px;
  height: 20px;
}

.taskbar {
  display: flex;
  height: 8px;
  padding-left: 48px;
  background: #000;
}

.task-search {
  width: 344px;
  background: #f2f2f2;
}

.task-idle {
  width: 48px;
  margin-left: 295px;
  background: #333;
}

.task-alert {
  width: 48px;
  margin-left: 99px;
  background: #9b5118;
}

/* floating input method bar */
.ime {
  position: absolute;
  right: 43px;
  top: 90px;
  display: flex;
  align-items: center;
  justify-content: space-between;
  width: 214px;
  height: 26px;
  padding: 0 7px 0 5px;
  background: #fff;
}

.ime svg {
  width: 16px;
  height: 16px;
  fill: #2a72dc;
}

.ime svg[fill="none"] {
  fill: none;
}

.ime .pale {
  fill: #b5ccef;
}

.ime button:first-child svg {
  width: 20px;
  height: 20px;
}

.ime-mode {
  width: 16px;
  color: #2a72dc;
  font-size: 19px;
}

/* brand card over the bottom right corner */
.brand {
  position: absolute;
  right: 0;
  bottom: 0;
  display: flex;
  align-items: center;
  width: 528px;
  height: 264px;
  padding-left: 46px;
  background: #fefefe;
  color: #000;
}

.brand-logo {
  width: 143px;
  height: 119px;
}

.brand-text {
  display: flex;
  flex-direction: column;
  padding-top: 3px;
  font-style: italic;
  white-space: nowrap;
}

.brand-text strong {
  font-size: 57px;
  font-weight: 900;
  line-height: 54px;
  -webkit-text-stroke: 2px #000;
}

.brand-text span {
  font: italic 600 37px/40px "Open Sans", sans-serif;
}
```
